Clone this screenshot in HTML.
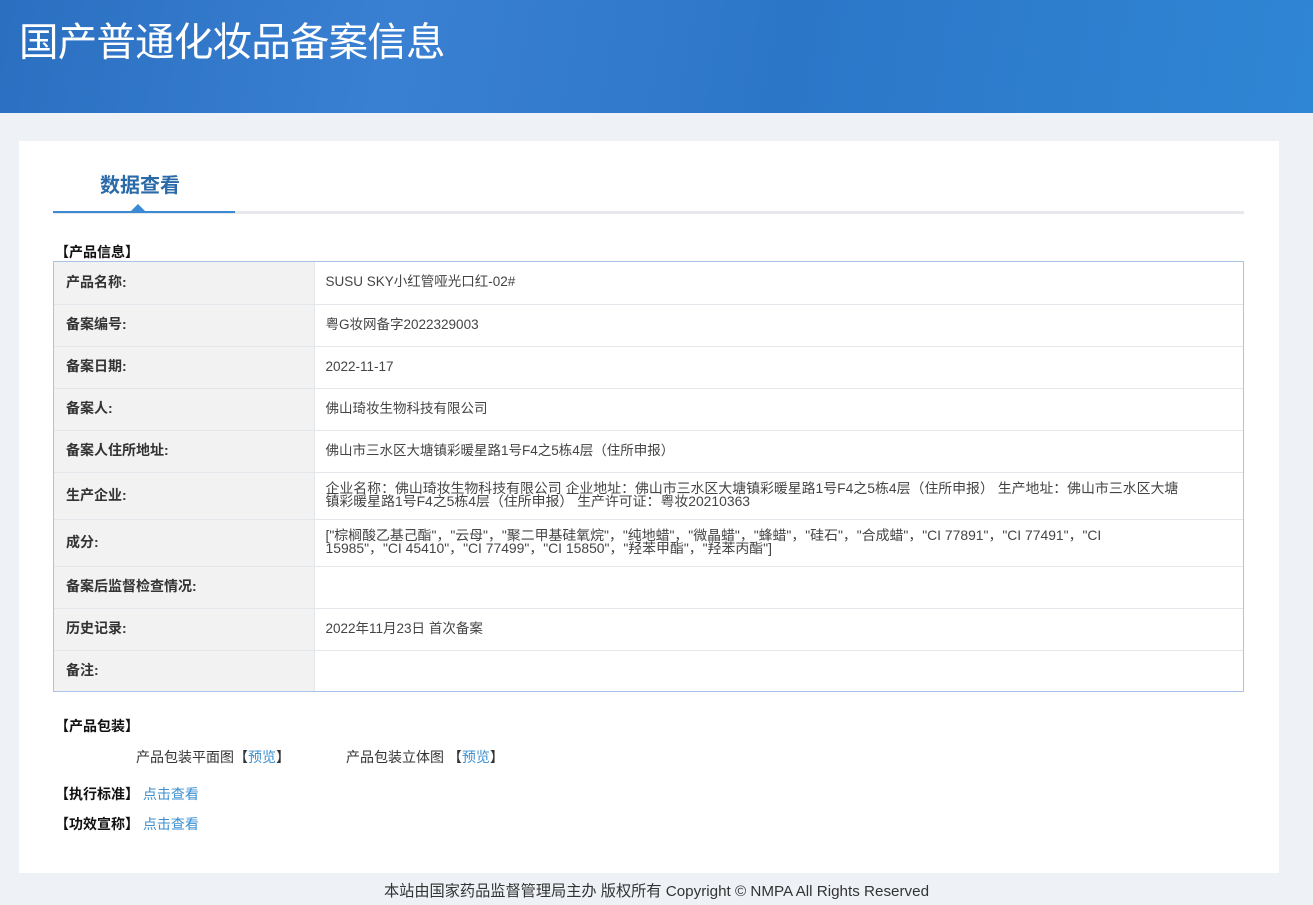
<!DOCTYPE html>
<html><head><meta charset="utf-8"><style>
*{margin:0;padding:0;box-sizing:border-box}
body{width:1313px;height:905px;background:#eef2f6;font-family:"Liberation Sans","Noto Sans CJK SC",sans-serif;color:#333;position:relative;overflow:hidden;font-size:14px}
.hd{position:absolute;left:0;top:0;width:1313px;height:113px;background:linear-gradient(100deg,#2a6fc0 0%,#3a80d2 30%,#2c76c8 60%,#2f86d4 100%)}
.hd h1{position:absolute;left:19px;top:11px;font-size:39.5px;font-weight:normal;color:#fff;letter-spacing:-0.8px}
.card{position:absolute;left:19px;top:141px;width:1260px;height:732px;background:#fff}
.tab{position:absolute;left:81px;top:28px;font-size:20px;font-weight:bold;color:#2b6aa8}
.ln{position:absolute;left:34px;top:70px;width:1191px;height:3px;background:#e6e8eb}
.ln b{position:absolute;left:0;top:0;width:182px;height:2px;background:#3a8ad6}
.tri{position:absolute;left:112px;top:63px;width:0;height:0;border-left:7px solid transparent;border-right:7px solid transparent;border-bottom:7px solid #3a8ad6}
.sec{position:absolute;font-weight:bold;color:#111;font-size:14px}
.tb{position:absolute;left:34px;top:120px;width:1191px;border:1px solid #a9c4e6}
table{width:100%;border-collapse:collapse}
td{border-bottom:1px solid #e3e6ea;height:42px;font-size:13.5px;vertical-align:middle;padding-bottom:2px}
td.l{width:260px;background:#f2f2f2;font-weight:bold;padding-left:12px;color:#333;font-size:14px}
td.v{padding-left:11px;color:#444;line-height:13px;border-left:1px solid #e3e6ea}
tr.t td{height:47px}
tr.t td.v{font-size:13.9px}
a{color:#3a8fd0;text-decoration:none}
.ft{position:absolute;left:0;top:879px;width:1313px;text-align:center;font-size:15.2px;color:#333}
</style></head><body>
<div class="hd"><h1>国产普通化妆品备案信息</h1></div>
<div class="card">
<div class="tab">数据查看</div>
<div class="tri"></div>
<div class="ln"><b></b></div>
<div class="sec" style="left:36px;top:101px">【产品信息】</div>
<div class="tb"><table>
<tr><td class="l">产品名称:</td><td class="v">SUSU SKY小红管哑光口红-02#</td></tr>
<tr><td class="l">备案编号:</td><td class="v">粤G妆网备字2022329003</td></tr>
<tr><td class="l">备案日期:</td><td class="v">2022-11-17</td></tr>
<tr><td class="l">备案人:</td><td class="v">佛山琦妆生物科技有限公司</td></tr>
<tr><td class="l">备案人住所地址:</td><td class="v">佛山市三水区大塘镇彩暖星路1号F4之5栋4层（住所申报）</td></tr>
<tr class="t"><td class="l">生产企业:</td><td class="v">企业名称：佛山琦妆生物科技有限公司 企业地址：佛山市三水区大塘镇彩暖星路1号F4之5栋4层（住所申报） 生产地址：佛山市三水区大塘<br>镇彩暖星路1号F4之5栋4层（住所申报） 生产许可证：粤妆20210363</td></tr>
<tr class="t"><td class="l">成分:</td><td class="v">["棕榈酸乙基己酯"，"云母"，"聚二甲基硅氧烷"，"纯地蜡"，"微晶蜡"，"蜂蜡"，"硅石"，"合成蜡"，"CI 77891"，"CI 77491"，"CI<br>15985"，"CI 45410"，"CI 77499"，"CI 15850"，"羟苯甲酯"，"羟苯丙酯"]</td></tr>
<tr><td class="l">备案后监督检查情况:</td><td class="v"></td></tr>
<tr><td class="l">历史记录:</td><td class="v">2022年11月23日 首次备案</td></tr>
<tr><td class="l" style="border-bottom:none;height:41px">备注:</td><td class="v" style="border-bottom:none;height:41px"></td></tr>
</table></div>
<div class="sec" style="left:36px;top:575px">【产品包装】</div>
<div style="position:absolute;left:117px;top:606px">产品包装平面图【<a>预览</a>】</div>
<div style="position:absolute;left:327px;top:606px">产品包装立体图 【<a>预览</a>】</div>
<div class="sec" style="left:36px;top:643px">【执行标准】 <a style="font-weight:normal">点击查看</a></div>
<div class="sec" style="left:36px;top:673px">【功效宣称】 <a style="font-weight:normal">点击查看</a></div>
</div>
<div class="ft">本站由国家药品监督管理局主办 版权所有 Copyright © NMPA All Rights Reserved</div>
</body></html>
